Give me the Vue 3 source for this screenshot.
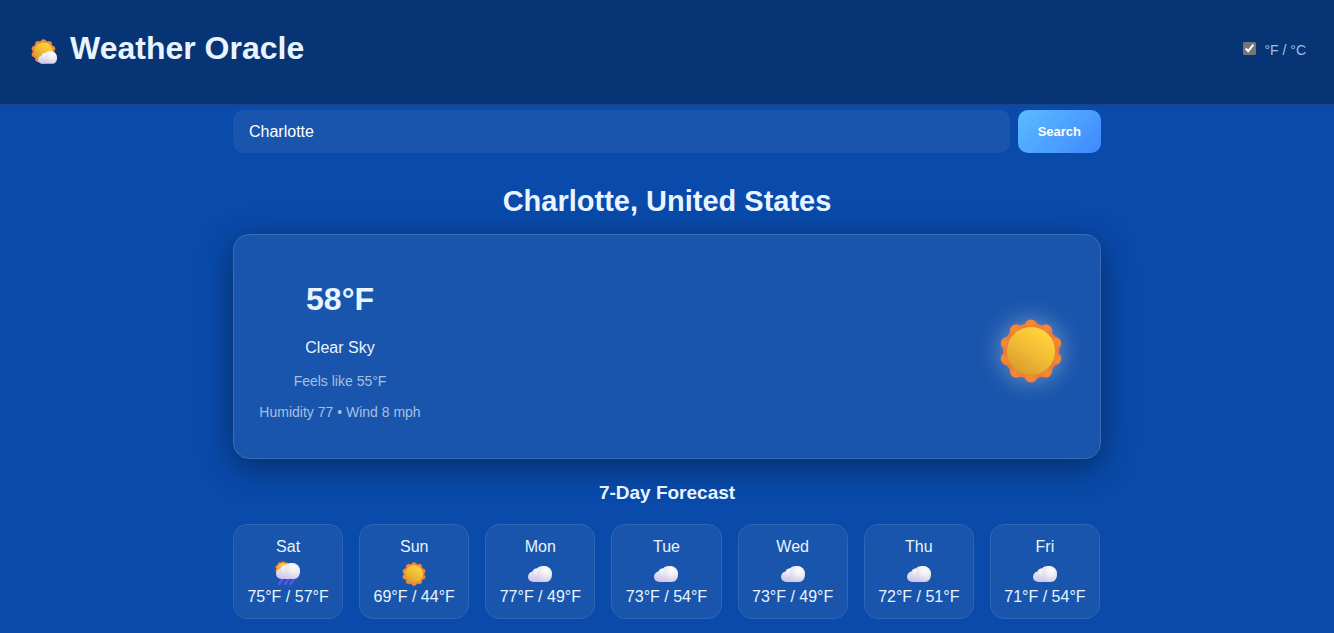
<script setup>
import { ref } from 'vue'

const city = ref('Charlotte')
const fahrenheit = ref(true)
const days = [
  { name: 'Sat', icon: 'rain', temps: '75°F / 57°F' },
  { name: 'Sun', icon: 'sun', temps: '69°F / 44°F' },
  { name: 'Mon', icon: 'cloud', temps: '77°F / 49°F' },
  { name: 'Tue', icon: 'cloud', temps: '73°F / 54°F' },
  { name: 'Wed', icon: 'cloud', temps: '73°F / 49°F' },
  { name: 'Thu', icon: 'cloud', temps: '72°F / 51°F' },
  { name: 'Fri', icon: 'cloud', temps: '71°F / 54°F' }
]
const petals = Array.from({ length: 10 }, (_, i) => i * 36)
</script>

<template>
  <svg class="defs" aria-hidden="true">
    <defs>
      <linearGradient id="disc" x1="0.75" y1="0.1" x2="0.2" y2="0.95">
        <stop offset="0" stop-color="#ffd23c" />
        <stop offset="0.45" stop-color="#f2bd35" />
        <stop offset="1" stop-color="#d99b2e" />
      </linearGradient>
      <radialGradient id="ray" cx="0.5" cy="0.3" r="0.6">
        <stop offset="0" stop-color="#f78c33" />
        <stop offset="1" stop-color="#ec7738" />
      </radialGradient>
      <linearGradient id="puff" x1="0.6" y1="0" x2="0.4" y2="1">
        <stop offset="0" stop-color="#f8f8fb" />
        <stop offset="0.5" stop-color="#e6e4ee" />
        <stop offset="1" stop-color="#cfc4ee" />
      </linearGradient>
      <radialGradient id="ball" cx="0.6" cy="0.3" r="0.7">
        <stop offset="0" stop-color="#ffffff" />
        <stop offset="0.5" stop-color="#f0eff4" />
        <stop offset="1" stop-color="#d8d3e8" />
      </radialGradient>
      <symbol id="sun" viewBox="0 0 64 64">
        <circle cx="32" cy="32" r="28" fill="#ec7a36" />
        <ellipse v-for="a in petals" :key="a" cx="32" cy="8" rx="7" ry="7.500" fill="url(#ray)" :transform="`rotate(${a} 32 32)`" />
        <circle cx="32" cy="32" r="25" fill="#e5872d" />
        <circle cx="32" cy="32" r="24" fill="url(#disc)" />
      </symbol>
      <symbol id="cloud" viewBox="0 0 24 16">
        <path d="M5.500 16C2.500 16 0 13.800 0 10.800C0 8 2 5.700 4.700 5.400C5.500 3.200 7.200 2.200 9 2.400C10.500 0.800 13 0 15.500 0C20.500 0 24 3.800 24 8.500C24 13 21.500 16 18 16Z" fill="url(#puff)" />
        <circle cx="8.500" cy="7" r="4.500" fill="url(#ball)" opacity="0.6" />
        <circle cx="16.500" cy="7.500" r="7.500" fill="url(#ball)" opacity="0.8" />
      </symbol>
    </defs>
  </svg>

  <header class="topbar">
    <div class="brand">
      <svg class="logo" viewBox="0 0 28 28" aria-hidden="true">
        <use href="#sun" x="1" y="1" width="25" height="25" />
        <use href="#cloud" x="8" y="13" width="19" height="13" />
      </svg>
      <h1>Weather Oracle</h1>
    </div>
    <label class="units"><input v-model="fahrenheit" type="checkbox" /><span>°F / °C</span></label>
  </header>

  <main class="content">
    <form class="search" @submit.prevent>
      <input v-model="city" type="text" aria-label="City" />
      <button type="submit">Search</button>
    </form>

    <h2 class="place">Charlotte, United States</h2>

    <section class="current">
      <div class="summary">
        <p class="temp">58°F</p>
        <p class="sky">Clear Sky</p>
        <p class="detail">Feels like 55°F</p>
        <p class="detail">Humidity 77 • Wind 8 mph</p>
      </div>
      <svg class="big-sun" viewBox="0 0 64 64" role="img" aria-label="Sunny"><use href="#sun" /></svg>
    </section>

    <h3 class="forecast-title">7-Day Forecast</h3>
    <section class="forecast">
      <article v-for="day in days" :key="day.name" class="day">
        <span>{{ day.name }}</span>
        <svg class="day-icon" viewBox="0 0 28 28" aria-hidden="true">
          <use v-if="day.icon === 'sun'" href="#sun" x="2" y="2" width="24" height="24" />
          <use v-else-if="day.icon === 'cloud'" href="#cloud" x="2" y="6" width="24" height="16" />
          <g v-else>
            <use href="#sun" x="1" y="1" width="16" height="16" />
            <path d="M8.500 19L5 24M14.500 19L11 24M20 19L16.500 24" stroke="#5855ef" stroke-width="2.500" stroke-linecap="round" />
            <use href="#cloud" x="2" y="3" width="24" height="16" />
          </g>
        </svg>
        <span>{{ day.temps }}</span>
      </article>
    </section>
  </main>
</template>

<style>
body {
  margin: 0;
  background: #094aaa;
}
</style>

<style scoped>
.defs {
  position: absolute;
  width: 0;
  height: 0;
}
.topbar,
.content {
  font-family: "Liberation Sans", Arial, sans-serif;
  color: #e8f4ff;
}
.topbar {
  display: flex;
  align-items: center;
  justify-content: space-between;
  padding: 28px 28px 36px;
  background: #073474;
  border-bottom: 1px solid #194681;
}
.brand {
  display: flex;
  align-items: center;
  gap: 12px;
}
.logo {
  width: 28px;
  height: 28px;
  margin: 8px 0 0 2px;
}
h1 {
  margin: 0;
  font-size: 32px;
  line-height: 40px;
}
.units {
  display: flex;
  align-items: baseline;
  gap: 8px;
  padding-top: 4px;
  font-size: 14px;
  line-height: 20px;
  color: #a5c0e2;
}
.units input {
  width: 13px;
  height: 13px;
  margin: 0;
  accent-color: #757575;
}
.content {
  max-width: 868px;
  margin: 0 auto;
  padding: 5px 0 14px;
  text-align: center;
}
.search {
  display: flex;
  gap: 8px;
}
.search input {
  flex: 1;
  min-width: 0;
  padding: 12px 16px;
  border: 0;
  border-radius: 10px;
  background: #1955ac;
  color: #ffffff;
  font: 16px/19px "Liberation Sans", Arial, sans-serif;
}
.search button {
  padding: 12px 20px;
  border: 0;
  border-radius: 10px;
  background: linear-gradient(135deg, #5bbcff, #4088ff);
  color: #ffffff;
  font: bold 13px/19px "Liberation Sans", Arial, sans-serif;
}
.place {
  margin: 32px 0 17px;
  font-size: 29px;
  line-height: 32px;
}
.current {
  display: flex;
  align-items: center;
  justify-content: space-between;
  padding: 31px 37px 23px 23px;
  border: 1px solid #3a6db8;
  border-radius: 16px;
  background: #1955ac;
  box-shadow: 0 8px 32px rgba(0, 0, 0, 0.4);
}
.summary {
  min-width: 166px;
  padding-top: 7px;
}
.summary p {
  margin: 0 0 15px;
}
.summary .temp {
  margin-bottom: 14px;
  font-size: 32px;
  font-weight: bold;
  line-height: 52px;
}
.summary .sky {
  margin-bottom: 16px;
  font-size: 16px;
  line-height: 18px;
}
.detail {
  font-size: 14px;
  line-height: 16px;
  color: #a5c0e2;
}
.big-sun {
  width: 64px;
  height: 64px;
  filter: drop-shadow(0 0 12px rgba(255, 255, 255, 0.4));
}
.forecast-title {
  margin: 23px 0 20px;
  font-size: 19px;
  line-height: 22px;
}
.forecast {
  display: grid;
  grid-template-columns: repeat(7, 1fr);
  gap: 16px;
  padding-right: 1px;
}
.day {
  display: flex;
  flex-direction: column;
  align-items: center;
  padding: 12px 0 11px;
  border: 1px solid #2f66b5;
  border-radius: 14px;
  background: #1955ac;
  font-size: 16px;
  line-height: 20px;
}
.day-icon {
  width: 28px;
  height: 28px;
  margin: 3px 0 -1px;
}
</style>
